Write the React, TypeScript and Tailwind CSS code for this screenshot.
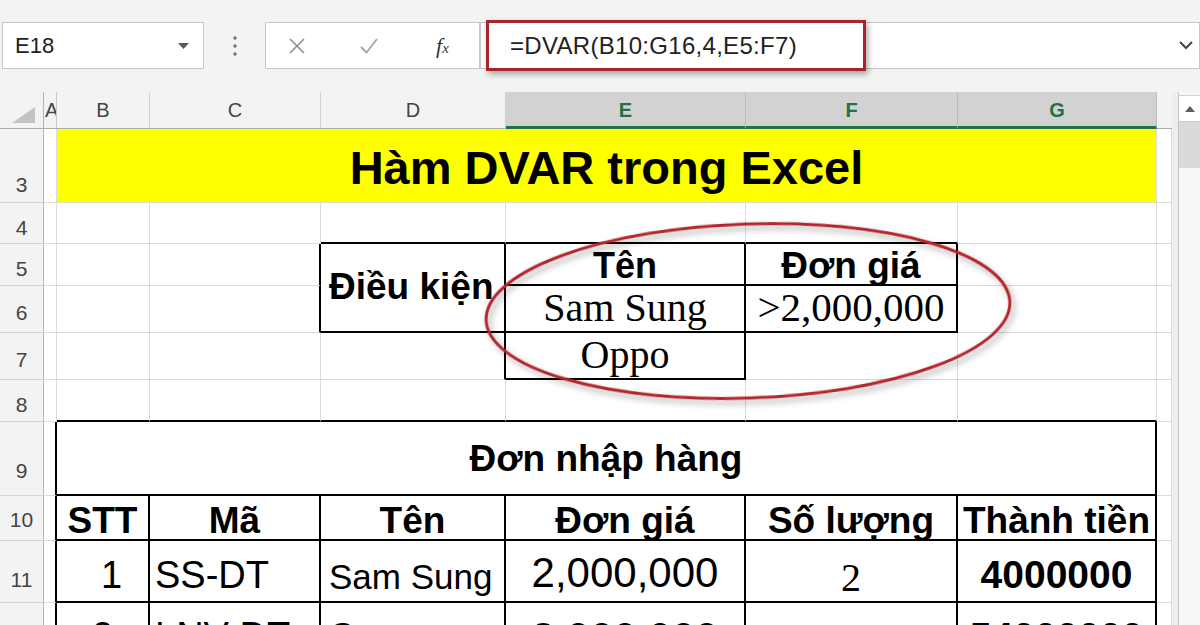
import React from 'react';

type Edge = 'g' | 'k' | 'n';

const SANS = "font-['Liberation_Sans',Arial,sans-serif]";
const SERIF = "font-['Liberation_Serif','Times_New_Roman',serif]";

function Cell({ r = 'g', b = 'g', className = '', children }: { r?: Edge; b?: Edge; className?: string; children?: React.ReactNode }) {
  const right = r === 'k' ? 'border-r-2 border-r-black' : r === 'g' ? 'border-r border-r-[#dadada]' : '';
  const bottom = b === 'k' ? 'border-b-2 border-b-black' : b === 'g' ? 'border-b border-b-[#dadada]' : '';
  return <div className={`flex min-w-0 overflow-hidden whitespace-nowrap ${right} ${bottom} ${className}`}>{children}</div>;
}

function RowHead({ n, className = '' }: { n: string; className?: string }) {
  return (
    <div className={`flex justify-center bg-[#f3f3f3] border-r border-r-[#b4b4b4] border-b border-b-[#d6d6d6] text-[21px] leading-none text-[#444] ${className}`}>
      {n}
    </div>
  );
}

function ColHead({ label, on = false }: { label: string; on?: boolean }) {
  if (on) {
    return (
      <div className="flex items-center justify-center bg-[#d2d2d2] border-r border-r-[#bdbdbd] border-b-[3px] border-b-[#217346] pt-[2px] text-[20px] font-bold text-[#217346]">
        {label}
      </div>
    );
  }
  return (
    <div className="flex items-center justify-center bg-[#f3f3f3] border-r border-r-[#d0d0d0] border-b border-b-[#ababab] text-[20px] text-[#444]">
      {label}
    </div>
  );
}

function Toolbar() {
  return (
    <div className="flex h-[92px] shrink-0 items-start bg-[#f3f3f3] pt-[22px]">
      {/* name box */}
      <div className="ml-[2px] flex h-[47px] w-[202px] items-center justify-between border border-[#c6c6c6] bg-white pl-[12px] pr-[14px]">
        <span className="text-[22px] text-[#222]">E18</span>
        <svg width="11" height="6" viewBox="0 0 11 6">
          <polygon points="0,0 11,0 5.5,6" fill="#5a5a5a" />
        </svg>
      </div>
      <div className="flex h-[47px] w-[61px] items-center justify-center">
        <svg width="4" height="20" viewBox="0 0 4 20">
          <circle cx="2" cy="2" r="1.7" fill="#6f6f6f" />
          <circle cx="2" cy="10" r="1.7" fill="#6f6f6f" />
          <circle cx="2" cy="18" r="1.7" fill="#6f6f6f" />
        </svg>
      </div>
      {/* cancel / enter / fx */}
      <div className="flex h-[47px] w-[215px] items-center gap-[53px] border border-[#c6c6c6] bg-white pl-[22px]">
        <svg width="18" height="18" viewBox="0 0 18 18">
          <path d="M2 2 L16 16 M16 2 L2 16" stroke="#8e8e8e" strokeWidth="1.6" fill="none" />
        </svg>
        <svg width="20" height="18" viewBox="0 0 20 18">
          <path d="M2 10 L7.5 15.5 L18 2" stroke="#a3a3a3" strokeWidth="1.8" fill="none" />
        </svg>
        <span className={`${SERIF} ml-[4px] text-[22px] italic leading-none text-[#333]`}>
          f<span className="text-[15px]">x</span>
        </span>
      </div>
      {/* formula input */}
      <div className="flex h-[47px] flex-1 items-center justify-between border border-[#c6c6c6] bg-white pl-[5px] pr-[6px]">
        <div className="flex h-[51px] w-[380px] items-center border-[3px] border-[#a8232b] bg-white pl-[21px] shadow-[2px_3px_6px_rgba(0,0,0,0.35)]">
          <span className="text-[24px] tracking-[0.3px] text-[#222]">=DVAR(B10:G16,4,E5:F7)</span>
        </div>
        <svg width="14" height="9" viewBox="0 0 14 9">
          <polyline points="1,1 7,7 13,1" stroke="#444" strokeWidth="2" fill="none" />
        </svg>
      </div>
    </div>
  );
}

function Scrollbar() {
  return (
    <div className="flex w-[28px] shrink-0 bg-[#eeeeee] pl-[6px]">
      <div className="flex flex-1 flex-col border-l border-l-[#c6c6c6] bg-[#f7f7f7]">
        <div className="mt-[3px] flex h-[27px] items-center justify-center border-y border-[#cfcfcf] bg-white">
          <svg width="10" height="6" viewBox="0 0 10 6">
            <polygon points="0,6 10,6 5,0" fill="#5f5f5f" />
          </svg>
        </div>
        <div className="h-[46px] bg-[#dadada]" />
      </div>
    </div>
  );
}

export default function App() {
  const hdr = 'items-end justify-center text-[37px] font-bold leading-none text-black';
  const dat = 'items-end pb-[7px] text-[38px] leading-none text-black';
  return (
    <div className={`flex h-[625px] w-[1200px] flex-col overflow-hidden bg-white ${SANS}`}>
      <Toolbar />
      <div className="relative flex h-[533px] overflow-hidden">
        <div className="grid w-[1172px] shrink-0 grid-cols-[44px_13px_93px_171px_185px_240px_212px_199px_15px] grid-rows-[37px_74px_41px_42px_47px_47px_42px_74px_45px_62px_62px]">
          {/* header row */}
          <div className="relative bg-[#f3f3f3] border-r border-r-[#b4b4b4] border-b border-b-[#ababab]">
            <svg className="absolute bottom-[5px] right-[8px]" width="23" height="16" viewBox="0 0 23 16">
              <polygon points="23,0 23,16 0,16" fill="#c3c3c3" />
            </svg>
          </div>
          <div className="flex items-center justify-start overflow-hidden bg-[#f3f3f3] border-r border-r-[#c8c8c8] border-b border-b-[#ababab] pl-[1px] text-[20px] text-[#444]">
            A
          </div>
          <ColHead label="B" />
          <ColHead label="C" />
          <ColHead label="D" />
          <ColHead label="E" on />
          <ColHead label="F" on />
          <ColHead label="G" on />
          <div className="bg-[#f3f3f3] border-b border-b-[#ababab]" />

          {/* row 3 */}
          <RowHead n="3" className="items-end pb-[7px]" />
          <Cell />
          <Cell className="col-span-6 items-center justify-center bg-[#ffff00] pt-[4px]">
            <span className="text-[47px] font-bold leading-none text-black">Hàm DVAR trong Excel</span>
          </Cell>
          <Cell />

          {/* row 4 */}
          <RowHead n="4" className="items-end pb-[5px]" />
          <Cell />
          <Cell />
          <Cell />
          <Cell b="k" />
          <Cell b="k" />
          <Cell b="k" />
          <Cell />
          <Cell />

          {/* row 5 */}
          <RowHead n="5" className="items-end pb-[6px]" />
          <Cell />
          <Cell />
          <Cell r="k" />
          <Cell r="k" b="k" className="row-span-2 items-center pl-[8px] pb-[2px]">
            <span className="text-[37px] font-bold leading-none text-black">Điều kiện</span>
          </Cell>
          <Cell r="k" b="k" className="items-end justify-center">
            <span className="text-[36px] font-bold leading-none text-black">Tên</span>
          </Cell>
          <Cell r="k" b="k" className="items-end justify-center">
            <span className="text-[37px] font-bold leading-none text-black">Đơn giá</span>
          </Cell>
          <Cell />
          <Cell />

          {/* row 6 */}
          <RowHead n="6" className="items-end pb-[9px]" />
          <Cell />
          <Cell />
          <Cell r="k" />
          <Cell r="k" b="k" className="items-end justify-center pb-[3px]">
            <span className={`${SERIF} text-[40px] leading-none text-black`}>Sam Sung</span>
          </Cell>
          <Cell r="k" b="k" className="items-end justify-center pb-[3px]">
            <span className={`${SERIF} text-[41px] leading-none text-black`}>&gt;2,000,000</span>
          </Cell>
          <Cell />
          <Cell />

          {/* row 7 */}
          <RowHead n="7" className="items-end pb-[9px]" />
          <Cell />
          <Cell />
          <Cell />
          <Cell r="k" />
          <Cell r="k" b="k" className="items-end justify-center pb-[3px]">
            <span className={`${SERIF} text-[40px] leading-none text-black`}>Oppo</span>
          </Cell>
          <Cell />
          <Cell />
          <Cell />

          {/* row 8 */}
          <RowHead n="8" className="items-end pb-[6px]" />
          <Cell />
          <Cell b="k" />
          <Cell b="k" />
          <Cell b="k" />
          <Cell b="k" />
          <Cell b="k" />
          <Cell b="k" />
          <Cell />

          {/* row 9 */}
          <RowHead n="9" className="items-end pb-[14px]" />
          <Cell r="k" />
          <Cell r="k" b="k" className="col-span-6 items-center justify-center">
            <span className="text-[37px] font-bold leading-none text-black">Đơn nhập hàng</span>
          </Cell>
          <Cell />

          {/* row 10 */}
          <RowHead n="10" className="items-end pb-[10px]" />
          <Cell r="k" />
          <Cell r="k" b="k" className={hdr}>STT</Cell>
          <Cell r="k" b="k" className={hdr}>Mã</Cell>
          <Cell r="k" b="k" className={hdr}>Tên</Cell>
          <Cell r="k" b="k" className={hdr}>Đơn giá</Cell>
          <Cell r="k" b="k" className={hdr}>Số lượng</Cell>
          <Cell r="k" b="k" className={hdr}>Thành tiền</Cell>
          <Cell />

          {/* row 11 */}
          <RowHead n="11" className="items-end pb-[12px]" />
          <Cell r="k" />
          <Cell r="k" b="k" className={`${dat} justify-center pl-[18px]`}>1</Cell>
          <Cell r="k" b="k" className={`${dat} pl-[5px]`}>SS-DT</Cell>
          <Cell r="k" b="k" className="items-end pb-[7px] pl-[8px] text-[35px] leading-none text-black">Sam Sung</Cell>
          <Cell r="k" b="k" className="items-end justify-center pb-[7px] text-[42px] leading-none text-black">2,000,000</Cell>
          <Cell r="k" b="k" className="items-end justify-center pb-[3px]">
            <span className={`${SERIF} text-[40px] leading-none text-black`}>2</span>
          </Cell>
          <Cell r="k" b="k" className="items-end justify-center pb-[7px] text-[39px] font-bold leading-none text-black">4000000</Cell>
          <Cell />

          {/* row 12 (cut off at the bottom) */}
          <RowHead n="12" className="items-end pb-[12px]" />
          <Cell r="k" />
          <Cell r="k" className="items-start justify-center pt-[14px] text-[38px] leading-none text-black">2</Cell>
          <Cell r="k" className="items-start pl-[5px] pt-[14px] text-[38px] leading-none text-black">LNV-DT</Cell>
          <Cell r="k" className="items-start pl-[8px] pt-[14px] text-[35px] leading-none text-black">Oppo</Cell>
          <Cell r="k" className="items-start justify-center pt-[14px] text-[42px] leading-none text-black">3,000,000</Cell>
          <Cell r="k" className="items-start justify-center pt-[18px]">
            <span className={`${SERIF} text-[40px] leading-none text-black`}>18</span>
          </Cell>
          <Cell r="k" className="items-start justify-center pt-[14px] text-[39px] font-bold leading-none text-black">54000000</Cell>
          <Cell />
        </div>
        <Scrollbar />
        <svg className="pointer-events-none absolute left-0 top-0" width="1172" height="533" viewBox="0 0 1172 533">
          <defs>
            <filter id="ellShadow" x="-10%" y="-30%" width="120%" height="160%">
              <feDropShadow dx="3" dy="4" stdDeviation="3" floodColor="#000" floodOpacity="0.35" />
            </filter>
          </defs>
          <ellipse cx="748" cy="219" rx="262" ry="87" transform="rotate(-2 748 219)" fill="none" stroke="#b3262e" strokeWidth="3" filter="url(#ellShadow)" />
        </svg>
      </div>
    </div>
  );
}
